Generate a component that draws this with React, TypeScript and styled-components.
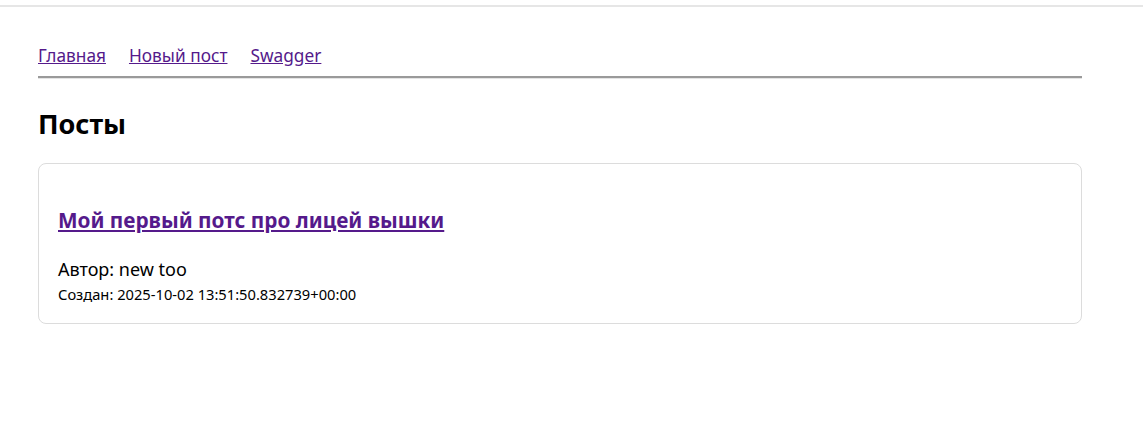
import React from "react";
import styled, { createGlobalStyle } from "styled-components";

const Global = createGlobalStyle`
  html, body { margin: 0; padding: 0; background: #fff; }
  body { font-family: "Noto Sans", "Open Sans", sans-serif; color: #000; }
`;

const TopStrip = styled.div`
  height: 5px;
  border-bottom: 2px solid #e6e6e6;
`;

const Page = styled.div`
  max-width: 1044px;
  padding: 0 0 0 38px;
`;

const Nav = styled.nav`
  display: flex;
  gap: 23px;
  padding-top: 37px;
  padding-bottom: 8px;
  border-bottom: 2px solid #9a9a9a;
  box-shadow: 0 1px 0 #e4e4e4;
`;

const NavLink = styled.a`
  font-size: 17.3px;
  line-height: 24px;
  color: #551a8b;
  text-decoration: underline;
`;

const Heading = styled.h2`
  font-size: 27px;
  font-weight: 700;
  margin: 28px 0 21px;
  line-height: 36px;
`;

const Card = styled.article`
  border: 1px solid #dcdcdc;
  border-radius: 8px;
  padding: 20px 19px 19px;
`;

const Title = styled.h3`
  font-size: 20.75px;
  font-weight: 700;
  margin: 22px 0 23px;
  line-height: 28px;
  a { color: #551a8b; text-decoration: underline; }
`;

const Author = styled.p`
  font-size: 18px;
  line-height: 24px;
  margin: 0 0 3px;
`;

const Created = styled.p`
  font-size: 14.7px;
  line-height: 20px;
  margin: 0;
`;

export default function App() {
  return (
    <>
      <Global />
      <TopStrip />
      <Page>
        <Nav>
          <NavLink href="#">Главная</NavLink>
          <NavLink href="#">Новый пост</NavLink>
          <NavLink href="#">Swagger</NavLink>
        </Nav>
        <Heading>Посты</Heading>
        <Card>
          <Title>
            <a href="#">Мой первый потс про лицей вышки</a>
          </Title>
          <Author>Автор: new too</Author>
          <Created>Создан: 2025-10-02 13:51:50.832739+00:00</Created>
        </Card>
      </Page>
    </>
  );
}
